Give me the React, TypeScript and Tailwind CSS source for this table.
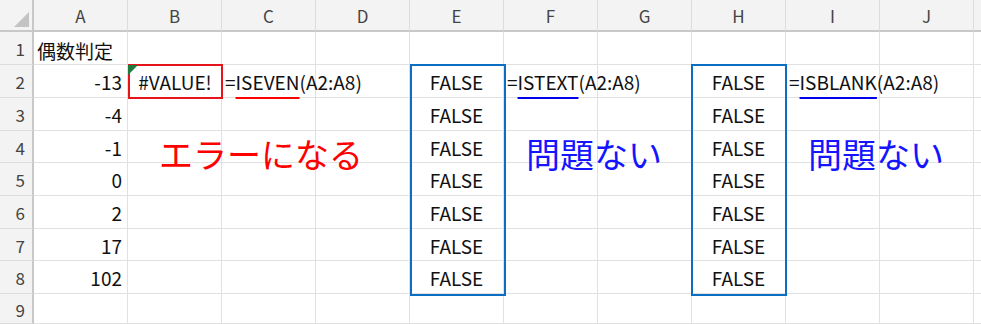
import React from "react";

const COLS = ["A", "B", "C", "D", "E", "F", "G", "H", "I", "J"];
const ROW_H = [33, 33, 33, 32, 33, 33, 32, 33, 30];
const AVALS = ["", "-13", "-4", "-1", "0", "2", "17", "102", ""];

const font = { fontFamily: '"Noto Sans CJK JP", "Noto Sans", sans-serif' };

function Formula({ name, color }: { name: string; color: "red" | "blue" }) {
  return (
    <span className="relative z-10 whitespace-nowrap pl-[3px] pt-[3px]">
      =
      <span
        className={
          color === "red"
            ? "underline decoration-[#ff0000] decoration-2 underline-offset-[7px]"
            : "underline decoration-[#0000ee] decoration-2 underline-offset-[7px]"
        }
      >
        {name}
      </span>
      (A2:A8)
    </span>
  );
}

function Big({ text, color, pl }: { text: string; color: string; pl: string }) {
  return (
    <span className={`relative z-10 whitespace-nowrap text-[34px] leading-[34px] pt-[6px] ${pl}`} style={{ color }}>
      {text}
    </span>
  );
}

function Cell({ r, c }: { r: number; c: number }) {
  let content: React.ReactNode = null;
  let align = "justify-start";
  let items = "items-center";
  if (c === 0) {
    if (r === 1) content = <span className="relative z-10 whitespace-nowrap pl-[3px] pt-[6px] text-[19px]">偶数判定</span>;
    else if (AVALS[r - 1]) {
      content = <span className="pr-[5px] pt-[3px]">{AVALS[r - 1]}</span>;
      align = "justify-end";
    }
  }
  if (r === 2 && c === 1) {
    align = "justify-center";
    content = (
      <>
        <span className="absolute left-0 top-0 z-30 w-[10px] h-[10px] bg-[#1e7a3c] [clip-path:polygon(0_0,100%_0,0_100%)]" />
        <span className="pt-[3px] pl-[1px]">#VALUE!</span>
      </>
    );
  }
  if (r === 2 && c === 2) content = <Formula name="ISEVEN" color="red" />;
  if (r === 2 && c === 5) content = <Formula name="ISTEXT" color="blue" />;
  if (r === 2 && c === 8) content = <Formula name="ISBLANK" color="blue" />;
  if (r >= 2 && r <= 8 && (c === 4 || c === 7)) {
    align = "justify-center";
    content = <span className="pt-[3px]">FALSE</span>;
  }
  if (r === 4 && c === 1) {
    items = "items-start";
    content = <Big text="エラーになる" color="#ff0000" pl="pl-[31px]" />;
  }
  if (r === 4 && (c === 5 || c === 8)) {
    items = "items-start";
    content = <Big text="問題ない" color="#1414ff" pl="pl-[22px]" />;
  }
  return (
    <div className={`relative flex ${items} ${align} border-r border-b border-[#e1e1e1]`}>
      {content}
    </div>
  );
}

export default function App() {
  return (
    <div className="relative w-[981px] h-[324px] overflow-hidden bg-white text-[19px] text-[#111]" style={font}>
      <div
        className="grid"
        style={{
          gridTemplateColumns: "34px repeat(10, 94px) 7px",
          gridTemplateRows: "32px " + ROW_H.map((h) => h + "px").join(" "),
        }}
      >
        {/* header corner */}
        <div className="flex items-end justify-end p-[3px] bg-[#f3f3f3] border-r-2 border-b-2 border-[#c8c8c8]">
          <div className="w-[15px] h-[15px] bg-[#c3c3c3] [clip-path:polygon(100%_0,100%_100%,0_100%)]" />
        </div>
        {COLS.map((l) => (
          <div
            key={l}
            className="bg-[#f3f3f3] border-r border-[#dcdcdc] border-b-2 border-b-[#c8c8c8] flex items-center justify-center pt-[2px] text-[17px] text-[#444]"
          >
            {l}
          </div>
        ))}
        <div className="bg-[#f3f3f3] border-b-2 border-b-[#c8c8c8]" />
        {ROW_H.map((_, i) => {
          const r = i + 1;
          return (
            <React.Fragment key={r}>
              <div className="bg-[#f3f3f3] border-r-2 border-r-[#c8c8c8] border-b border-b-[#dcdcdc] flex items-center justify-end pr-[7px] pt-[2px] text-[17px] text-[#444]">
                {r}
              </div>
              {COLS.map((_, c) => (
                <Cell key={c} r={r} c={c} />
              ))}
              <div className="border-b border-[#e1e1e1]" />
            </React.Fragment>
          );
        })}
      </div>
      {/* selection-style outlines drawn over the cells */}
      <div className="absolute left-[128px] top-[64px] w-[95px] h-[35px] border-2 border-[#e8141b] pointer-events-none z-20" />
      <div className="absolute left-[410px] top-[64px] w-[96px] h-[232px] border-2 border-[#0a6fc2] pointer-events-none z-20" />
      <div className="absolute left-[691px] top-[64px] w-[96px] h-[232px] border-2 border-[#0a6fc2] pointer-events-none z-20" />
    </div>
  );
}
